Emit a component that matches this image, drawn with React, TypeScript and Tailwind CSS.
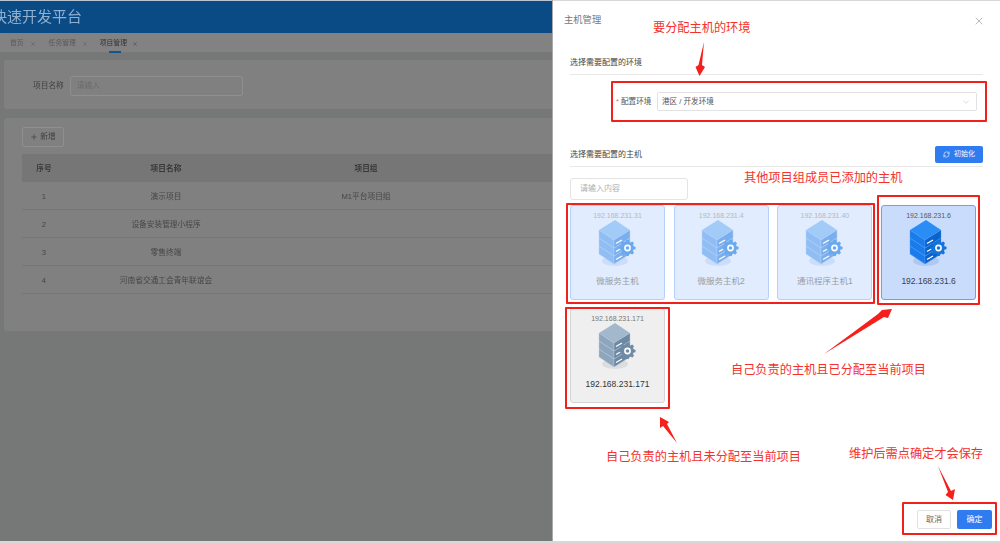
import { ChevronDown, Plus, RefreshCw, X } from "lucide-react";

const font = "font-['Liberation_Sans','Noto_Sans_CJK_SC',sans-serif]";

const rows = [
  ["1", "演示项目", "M1平台项目组"],
  ["2", "设备安装管理小程序", ""],
  ["3", "零售终端", ""],
  ["4", "河南省交通工会青年联谊会", ""],
];

type Tone = "faded" | "active" | "idle";

const palettes = {
  faded: { top: "#a3cbf8", left: "#8fbdf4", right: "#7aaeee", seam: "#b5d5fa", gear: "#6aa9ee", glow: "#c3d8f6" },
  active: { top: "#2a8cf5", left: "#1a7cea", right: "#0b62cc", seam: "#4ba0f7", gear: "#1474dc", glow: "#a5c2ee" },
  idle: { top: "#a3b8cd", left: "#8ea6bd", right: "#6d88a3", seam: "#bccbd9", gear: "#6f8aa6", glow: "#d6d7d9" },
};

function ServerIcon({ tone }: { tone: Tone }) {
  const c = palettes[tone];
  const layers = [0, 8, 16];
  return (
    <svg width="40" height="48" viewBox="0 0 40 48">
      <ellipse cx="17" cy="42" rx="13" ry="5" fill={c.glow} opacity="0.75" />
      {[...layers].reverse().map((dy) => (
        <g key={dy} transform={`translate(0 ${dy})`}>
          <path d="M1 11 L16 21 L16 29 L1 19 Z" fill={c.left} stroke={c.seam} strokeWidth="0.4" />
          <path d="M16 21 L32 11 L32 19 L16 29 Z" fill={c.right} stroke={c.seam} strokeWidth="0.4" />
        </g>
      ))}
      <path d="M17 1 L32 11 L16 21 L1 11 Z" fill={c.top} />
      {layers.map((dy) => (
        <path key={dy} d={`M18 ${24.5 + dy} L24 ${21 + dy}`} stroke="#ffffff" strokeWidth="1.3" />
      ))}
      <g transform="translate(29.5 29)">
        {[0, 45, 90, 135].map((a) => (
          <rect key={a} x="-1.5" y="-8" width="3" height="16" rx="0.7" fill={c.gear} transform={`rotate(${a})`} />
        ))}
        <circle r="6.3" fill={c.gear} />
        <circle r="3.4" fill="#ffffff" />
        <circle r="1.8" fill={c.gear} />
      </g>
    </svg>
  );
}

function HostCard({ ip, name, tone }: { ip: string; name: string; tone: Tone }) {
  const box = {
    faded: "border-[#b5d0fb] bg-[#e1ecfe]",
    active: "border-[#6f9ff0] bg-[#c9dcfb]",
    idle: "border-[#d5d5d5] bg-[#efefef]",
  }[tone];
  const ipText = { faded: "text-[#b4b8c0]", active: "text-[#555a63]", idle: "text-[#777777]" }[tone];
  const nameText = { faded: "text-[#9a9da3]", active: "text-[#3d4148]", idle: "text-[#333333]" }[tone];
  return (
    <div className={`flex h-[95px] w-[95px] flex-col items-center rounded-[3px] border pt-[5px] ${box}`}>
      <div className={`text-[7px] leading-[10px] ${ipText}`}>{ip}</div>
      <div className="-mt-[2px] h-[48px]">
        <ServerIcon tone={tone} />
      </div>
      <div className={`mt-[8px] text-[8.5px] leading-[12px] ${nameText}`}>{name}</div>
    </div>
  );
}

function Note({ className, children }: { className: string; children: string }) {
  return <div className={`absolute whitespace-nowrap text-[12.2px] leading-none text-[#f5312c] ${className}`}>{children}</div>;
}

function Frame({ className }: { className: string }) {
  return <div className={`absolute rounded-[1px] border-2 border-[#f0201c] ${className}`} />;
}

function ProjectPage() {
  return (
    <div className="flex h-full w-[553px] shrink-0 flex-col overflow-hidden border-r border-[#a9a9a9] bg-[#767878] blur-[0.4px]">
      <header className="flex h-[33px] shrink-0 items-center border-t border-[#b9c4d0] bg-[#0a4a85] text-[15px] text-[#8fb0cf]">
        <span className="-ml-[8px] whitespace-nowrap">快速开发平台</span>
      </header>
      <nav className="flex h-[20px] shrink-0 items-center border-b border-[#787878] bg-[#828282] pl-[10px] pt-[2px] text-[6.8px] text-[#5a5a5a]">
        <span>首页</span>
        <X size={6} className="ml-[6px] mr-[13px]" />
        <span>任务管理</span>
        <X size={6} className="ml-[6px] mr-[12px]" />
        <span className="relative text-[#333333]">
          项目管理
          <i className="absolute -bottom-[4px] left-[9px] h-[2px] w-[12px] bg-[#15548f]" />
        </span>
        <X size={6} className="ml-[5px] text-[#444444]" />
      </nav>
      <section className="ml-[4px] mt-[7px] flex h-[49px] shrink-0 items-center rounded-l-[3px] bg-[#808080] pl-[29px] pt-[3px] text-[7.7px] text-[#404040]">
        <span>项目名称</span>
        <div className="ml-[6px] flex h-[20px] w-[173px] items-center rounded-[2px] border border-[#8f8f8f] pl-[6px] text-[#6b6b6b]">请输入</div>
      </section>
      <section className="ml-[4px] mt-[9px] h-[213px] shrink-0 rounded-l-[3px] bg-[#808080] pl-[18px] pt-[9px]">
        <div className="flex h-[20px] w-[42px] items-center justify-center rounded-[2px] border border-[#8f8f8f] text-[7.7px] text-[#404040]">
          <Plus size={8} className="mr-[2px]" />
          新增
        </div>
        <div className="mt-[7px] text-[7.7px] text-[#464646]">
          <div className="flex h-[28px] items-center bg-[#767676] pt-[2px] font-bold text-[#383838]">
            <span className="w-[44px] text-center">序号</span>
            <span className="w-[200px] text-center">项目名称</span>
            <span className="w-[200px] text-center">项目组</span>
          </div>
          {rows.map(([no, name, group]) => (
            <div key={no} className="flex h-[28px] items-center border-b border-[#767676] pt-[2px]">
              <span className="w-[44px] text-center">{no}</span>
              <span className="w-[200px] text-center">{name}</span>
              <span className="w-[200px] text-center">{group}</span>
            </div>
          ))}
        </div>
      </section>
    </div>
  );
}

function SectionTitle({ children }: { children: string }) {
  return <div className="text-[8px] leading-[12px] text-[#444444]">{children}</div>;
}

function HostDrawer() {
  return (
    <aside className="flex h-full flex-1 flex-col border-t border-[#d8d8d8] bg-white px-[17px]">
      <div className="-mx-[6px] flex h-[38px] shrink-0 items-center justify-between pt-[2px] text-[9.3px] text-[#777777]">
        <span>主机管理</span>
        <X size={12} strokeWidth={1.2} className="mr-[4px] text-[#8a8a8a]" />
      </div>
      <div className="mt-[18px] border-b border-[#e8e8e8] pb-[5px]">
        <SectionTitle>选择需要配置的环境</SectionTitle>
      </div>
      <div className="ml-[46px] mr-[6px] mt-[17px] flex h-[19px] items-center text-[7.6px] text-[#555555]">
        <span className="mr-[2px] text-[#f56c6c]">*</span>
        <span className="w-[36px]">配置环境</span>
        <div className="flex h-[19px] flex-1 items-center justify-between rounded-[2px] border border-[#e2e2e2] pl-[4px] pr-[5px]">
          港区 / 开发环境
          <ChevronDown size={10} strokeWidth={1.2} className="text-[#b8b8b8]" />
        </div>
      </div>
      <div className="mt-[35px] flex items-center justify-between border-b border-[#e8e8e8] pb-[3px]">
        <SectionTitle>选择需要配置的主机</SectionTitle>
        <div className="flex h-[17px] w-[48px] items-center justify-center gap-[4px] rounded-[2px] bg-[#2f7bf0] text-[7px] text-white">
          <RefreshCw size={7} />
          初始化
        </div>
      </div>
      <div className="mt-[11px] flex h-[22px] w-[118px] items-center rounded-[3px] border border-[#e4e4e4] pl-[9px] text-[8px] text-[#b0b0b0]">请输入内容</div>
      <div className="mt-[5px] flex flex-wrap gap-x-[8.7px] gap-y-[8px]">
        <HostCard ip="192.168.231.31" name="微服务主机" tone="faded" />
        <HostCard ip="192.168.231.4" name="微服务主机2" tone="faded" />
        <HostCard ip="192.168.231.40" name="通讯程序主机1" tone="faded" />
        <HostCard ip="192.168.231.6" name="192.168.231.6" tone="active" />
        <HostCard ip="192.168.231.171" name="192.168.231.171" tone="idle" />
      </div>
      <div className="-mr-[9px] mb-[12px] mt-auto flex justify-end gap-[6px] text-[8px]">
        <div className="flex h-[19px] w-[34px] items-center justify-center rounded-[2px] border border-[#e2e2e2] text-[#666666]">取消</div>
        <div className="flex h-[19px] w-[35px] items-center justify-center rounded-[2px] bg-[#2f7bf0] text-white">确定</div>
      </div>
    </aside>
  );
}

function Annotations() {
  return (
    <>
      <Frame className="left-[611px] top-[81px] h-[41px] w-[376px]" />
      <Frame className="left-[566px] top-[203px] h-[101px] w-[309px]" />
      <Frame className="left-[877px] top-[195px] h-[110px] w-[103px]" />
      <Frame className="left-[565px] top-[307px] h-[102px] w-[105px]" />
      <Frame className="left-[902px] top-[502px] h-[33px] w-[95px]" />
      <Note className="left-[653px] top-[22px]">要分配主机的环境</Note>
      <Note className="left-[744px] top-[172px]">其他项目组成员已添加的主机</Note>
      <Note className="left-[731px] top-[364px]">自己负责的主机且已分配至当前项目</Note>
      <Note className="left-[606px] top-[451px]">自己负责的主机且未分配至当前项目</Note>
      <Note className="left-[849px] top-[448px]">维护后需点确定才会保存</Note>
      <svg className="absolute left-0 top-0" width="1000" height="543" viewBox="0 0 1000 543" fill="#f5201c">
        <path d="M704 42 L702 65 L705 67 L699.5 76 L695.5 67 L698.5 65 Z" />
        <path d="M824 354 L878 314 L882 310 L892 309 L888 318 L884 317 Z" />
        <path d="M677 443 L663 426 L660 428 L660 417 L669 422 L667 424 Z" />
        <path d="M938 466 L951 491 L955 489 L953 500 L945.5 495 L948 492 Z" />
      </svg>
    </>
  );
}

export default function App() {
  return (
    <div className={`relative flex h-[543px] w-[1000px] overflow-hidden border-b-2 border-[#d8d8d8] ${font}`}>
      <ProjectPage />
      <HostDrawer />
      <Annotations />
    </div>
  );
}
